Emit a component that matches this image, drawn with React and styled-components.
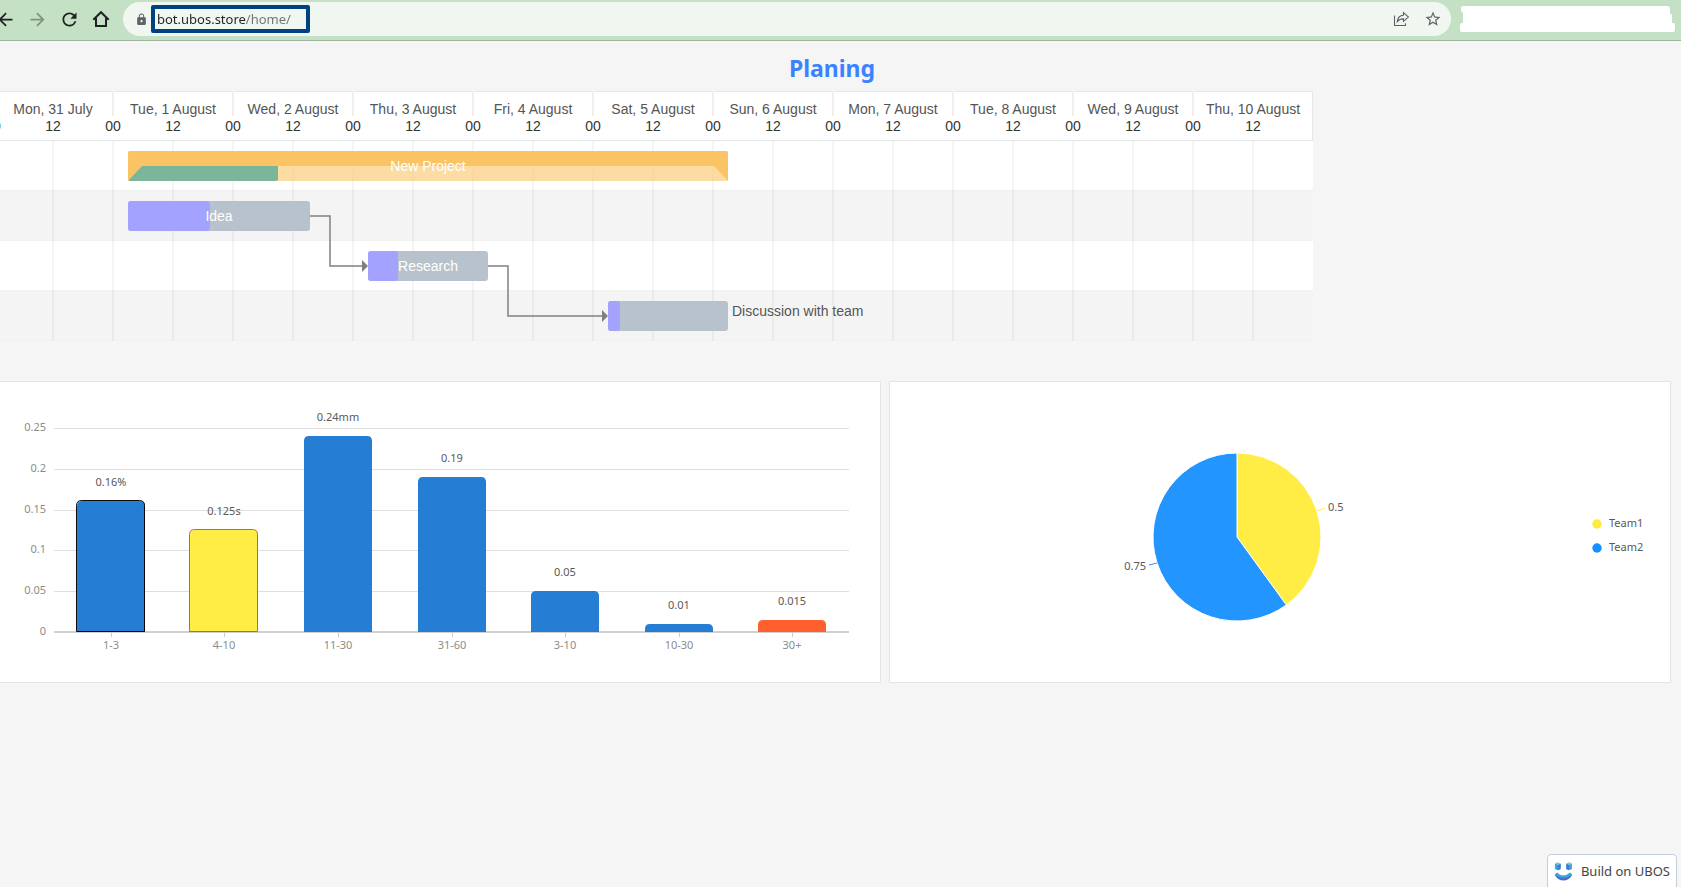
import React from 'react'
import styled, { createGlobalStyle } from 'styled-components'
import { MdArrowBack, MdArrowForward, MdRefresh, MdLock, MdStarBorder } from 'react-icons/md'

const GlobalStyle = createGlobalStyle`
  * {
    box-sizing: border-box;
  }
  body {
    margin: 0;
    background: #f5f5f5;
    font-family: "Noto Sans", "Open Sans", sans-serif;
    overflow-x: hidden;
  }
`

/* ---------- toolbar ---------- */

const Toolbar = styled.header`
  display: flex;
  align-items: center;
  gap: 6px;
  height: 41px;
  padding: 0 6px 2px 0;
  background: #c5e1c5;
  border-bottom: 1px solid #9fb59f;
  overflow: hidden;
`

const Nav = styled.nav`
  display: flex;
  margin-left: -11px;
`

const IconButton = styled.button`
  display: flex;
  align-items: center;
  justify-content: center;
  width: 32px;
  height: 32px;
  padding: 0;
  border: 0;
  background: none;
  color: ${p => (p.$muted ? '#7f917f' : p.$soft ? '#5f6368' : '#202124')};
  cursor: pointer;
`

const Omnibox = styled.div`
  flex: 1;
  display: flex;
  align-items: center;
  height: 34px;
  margin-right: 3px;
  padding: 0 2px 0 12px;
  border-radius: 17px;
  background: #f0f7f1;
  color: #5f6368;
`

const Address = styled.input`
  width: 159px;
  height: 28px;
  margin: 0 auto 0 3px;
  padding: 0 2px;
  border: 4px solid #00417f;
  border-radius: 2px;
  outline: 0;
  font: 13px "Noto Sans", "Open Sans", sans-serif;
  color: transparent;
  background: linear-gradient(90deg, #202124 91px, #6d736e 91px);
  background-clip: text;
`

/* ---------- page ---------- */

const Title = styled.h1`
  margin: 0;
  height: 50px;
  padding-right: 17px;
  line-height: 54px;
  font-size: 23px;
  text-align: center;
  color: #3b82ff;
`

const GanttScroll = styled.section`
  overflow: hidden;
  margin-bottom: 40px;
`

const GanttSvg = styled.svg`
  display: block;
  margin-left: -7px;
  font-family: "Liberation Sans", Arial, sans-serif;
  font-size: 14px;
`

const Cards = styled.section`
  display: grid;
  grid-template-columns: 881fr 782fr;
  gap: 8px;
  padding-right: 10px;
`

const Card = styled.article`
  min-width: 0;
  height: 302px;
  background: #fff;
  border: 1px solid #e4e4e4;
  ${p => p.$flush && 'border-left: 0;'}
`

const ChartSvg = styled.svg`
  display: block;
  width: 100%;
  height: 100%;
  font-size: 11px;
`

const Badge = styled.a`
  position: fixed;
  right: 4px;
  bottom: -3px;
  display: flex;
  align-items: center;
  gap: 8px;
  width: 130px;
  height: 36px;
  padding: 0 6px 2px;
  border: 1px solid #c4cddb;
  border-radius: 4px;
  background: #fff;
  color: #444;
  font-size: 13px;
  white-space: nowrap;
  text-decoration: none;
`

/* ---------- icons ---------- */

const HomeIcon = () => (
  <svg width="18" height="18" viewBox="0 0 18 18" fill="none" stroke="currentColor" strokeWidth="2">
    <path d="M1.3 9.8 9 2.2l7.7 7.6M4 8v8h10V8" />
  </svg>
)

const ShareIcon = () => (
  <svg width="17" height="16" viewBox="0 0 17 16" fill="none" stroke="currentColor" strokeWidth="1.1">
    <path d="M1.500 4.500v10h11v-2.300" />
    <path d="M10.500 1.600 15.400 6l-4.900 4.300V7.900C7.600 7.800 5.800 8.600 4.300 10.600 4.700 6.900 6.900 4.500 10.500 4.100z" />
  </svg>
)

const UbosLogo = () => (
  <svg width="20" height="22" viewBox="0 0 20 22">
    <path d="M1 3.400 4 2l3 1.200V9L4 10.300 1 9z" fill="#35a7e8" />
    <path d="M4 4.600 7 3.200V9l-3 1.300z" fill="#4d76c4" />
    <path d="M1 3.400 4 2l3 1.200-3 1.400z" fill="#6fd0f5" />
    <path d="M13 3.400 16 2l3 1.200V9l-3 1.300L13 9z" fill="#35a7e8" />
    <path d="M13 3.400 16 4.600v5.700L13 9z" fill="#4d76c4" />
    <path d="M13 3.400 16 2l3 1.200-3 1.400z" fill="#6fd0f5" />
    <path d="M1 14.200 3.500 12.600c3.500 4 9.500 4 13 0l2.500 1.600c-4 8-14 8-18 0z" fill="#36a9e6" />
    <path d="M1 14.200c4.500 5.400 13.500 5.400 18 0v1.200c-4 7.400-14 7.400-18 0z" fill="#4a6fc0" />
  </svg>
)

const Mask = () => (
  <svg width="215" height="26" viewBox="0 0 215 26" fill="#fff">
    <path d="M4 0H207q3 0 3 3v4l2 2v8h1q2 0 2 2v5q0 2-2 2H2q-2 0-2-2v-5q0-2 2-2h1V7L1 5V2q0-2 3-2z" />
  </svg>
)

/* ---------- gantt ---------- */

const DAY = 120
const HEAD = 50
const ROW = 50

const days = [
  'Mon, 31 July', 'Tue, 1 August', 'Wed, 2 August', 'Thu, 3 August',
  'Fri, 4 August', 'Sat, 5 August', 'Sun, 6 August', 'Mon, 7 August',
  'Tue, 8 August', 'Wed, 9 August', 'Thu, 10 August',
]

const tasks = [
  { name: 'New Project', start: 135, width: 600, done: 150, project: true },
  { name: 'Idea', start: 135, width: 182, done: 82 },
  { name: 'Research', start: 375, width: 120, done: 30 },
  { name: 'Discussion with team', start: 615, width: 120, done: 12, outside: true },
]

const GanttHeader = () => (
  <g textAnchor="middle">
    <rect x="0.5" y="0.5" width={days.length * DAY - 1} height={HEAD - 1} fill="#fff" stroke="#e6e6e6" />
    {days.map((day, i) => (
      <g key={day}>
        {i > 0 && <rect x={i * DAY - 1} y="0" width="2" height="25" fill="#f0f0f0" />}
        <text x={i * DAY + 60} y="23" fill="#555">{day}</text>
        <text x={i * DAY} y="40" fill="#333">00</text>
        <text x={i * DAY + 60} y="40" fill="#333">12</text>
      </g>
    ))}
  </g>
)

const ProjectBar = ({ start: x, width, done, y }) => (
  <g>
    <rect x={x} y={y} width={width} height="30" rx="2" fill="#fac465" opacity="0.6" />
    <path d={`M${x} ${y + 15}h${done}v13q0 2-2 2H${x + 1}z`} fill="#7db59a" />
    <path d={`M${x + 2} ${y}h${width - 4}q2 0 2 2v28l-14-15H${x + 14}l-14 15V${y + 2}q0-2 2-2z`} fill="#fac465" />
  </g>
)

const TaskBar = ({ start: x, width, done, y }) => (
  <g>
    <rect x={x} y={y} width={width} height="30" rx="3" fill="#b8c2cc" />
    <rect x={x} y={y} width={done} height="30" rx="3" fill="#a3a3ff" />
  </g>
)

const Arrow = ({ from, to, row }) => {
  const x = from.start + from.width
  const y = HEAD + row * ROW + 25
  return (
    <g>
      <path d={`M${x} ${y}h20v${ROW}H${to.start - 4}`} fill="none" stroke="#808080" strokeWidth="1.5" />
      <path d={`M${to.start} ${y + ROW}l-6-6v12z`} fill="#808080" />
    </g>
  )
}

const Gantt = () => {
  const width = days.length * DAY
  const height = HEAD + tasks.length * ROW
  return (
    <GanttScroll>
      <GanttSvg width={width} height={height} role="img" aria-label="Project timeline">
        {tasks.map((task, i) => (
          <g key={task.name}>
            <rect y={HEAD + i * ROW} width={width} height={ROW} fill={i % 2 ? '#f4f4f4' : '#fff'} />
            <rect y={HEAD + (i + 1) * ROW - 1} width={width} height="1" fill="#f0f0f0" />
          </g>
        ))}
        {Array.from({ length: days.length * 2 - 1 }, (_, i) => (
          <rect key={i} x={(i + 1) * 60 - 1} y={HEAD} width="2" height={height - HEAD} fill="#000" opacity="0.04" />
        ))}
        <GanttHeader />
        <Arrow from={tasks[1]} to={tasks[2]} row={1} />
        <Arrow from={tasks[2]} to={tasks[3]} row={2} />
        {tasks.map((task, i) => {
          const y = HEAD + i * ROW + 10
          const Bar = task.project ? ProjectBar : TaskBar
          return (
            <g key={task.name}>
              <Bar {...task} y={y} />
              {task.outside ? (
                <text x={task.start + task.width + 4} y={y + 15} fill="#555">{task.name}</text>
              ) : (
                <text x={task.start + task.width / 2} y={y + 20} fill="#fff" textAnchor="middle">{task.name}</text>
              )}
            </g>
          )
        })}
      </GanttSvg>
    </GanttScroll>
  )
}

/* ---------- bar chart ---------- */

const plot = { left: 54, right: 849, top: 46, bottom: 250 }
const ticks = [0.25, 0.2, 0.15, 0.1, 0.05, 0]

const bars = [
  { range: '1-3', value: 0.16, label: '0.16%', color: '#1976d2', border: '#000' },
  { range: '4-10', value: 0.125, label: '0.125s', color: '#ffeb3b', border: '#f44336' },
  { range: '11-30', value: 0.24, label: '0.24mm', color: '#1976d2' },
  { range: '31-60', value: 0.19, label: '0.19', color: '#1976d2' },
  { range: '3-10', value: 0.05, label: '0.05', color: '#1976d2' },
  { range: '10-30', value: 0.01, label: '0.01', color: '#1976d2' },
  { range: '30+', value: 0.015, label: '0.015', color: '#ff5722' },
]

const scaleY = value => plot.bottom - (value / 0.25) * (plot.bottom - plot.top)

const BarChart = () => {
  const band = (plot.right - plot.left) / bars.length
  const w = Math.round(band * 0.6)
  return (
    <ChartSvg viewBox="0 0 880 300" role="img" aria-label="Bar chart">
      {ticks.map(tick => {
        const y = Math.round(scaleY(tick))
        return (
          <g key={tick}>
            <rect
              x={plot.left}
              y={tick ? y : y - 1}
              width={plot.right - plot.left}
              height={tick ? 1 : 2}
              fill={tick ? '#dfdfdf' : '#d0d0d0'}
            />
            <text x="46" y={y + 3} textAnchor="end" fill="#8c8c8c">{tick}</text>
          </g>
        )
      })}
      {bars.map((bar, i) => {
        const mid = Math.round(plot.left + band * (i + 0.5))
        const top = Math.round(scaleY(bar.value))
        const x = mid - w / 2
        const shape = `M${x} ${plot.bottom}V${top + 5}q0-5 5-5h${w - 10}q5 0 5 5V${plot.bottom}z`
        return (
          <g key={bar.range} textAnchor="middle">
            <rect x={mid} y={plot.bottom} width="1" height="5" fill="#ccc" />
            <path d={shape} fill={bar.color} opacity="0.95" />
            {bar.border && (
              <path d={shape} transform="translate(-0.5 -0.5)" fill="none" stroke={bar.border} opacity="0.95" />
            )}
            <text x={mid} y={top - 15} fill="#595959">{bar.label}</text>
            <text x={mid} y="267" fill="#8c8c8c">{bar.range}</text>
          </g>
        )
      })}
    </ChartSvg>
  )
}

/* ---------- pie chart ---------- */

const PieChart = () => {
  const cx = 347
  const cy = 155
  const r = 84
  const angle = 0.4 * 2 * Math.PI
  const ex = cx + r * Math.sin(angle)
  const ey = cy - r * Math.cos(angle)
  return (
    <ChartSvg viewBox="0 0 780 300" role="img" aria-label="Pie chart">
      <g stroke="#fff">
        <path d={`M${cx} ${cy}V${cy - r}A${r} ${r} 0 0 1 ${ex} ${ey}z`} fill="#ffec45" />
        <path d={`M${cx} ${cy}L${ex} ${ey}A${r} ${r} 0 1 1 ${cx} ${cy - r}z`} fill="#2395ff" />
      </g>
      <path d="M427 129l8-3" stroke="#ffec45" />
      <path d="M267 181l-8 2" stroke="#2395ff" />
      <g fill="#595959">
        <text x="438" y="129">0.5</text>
        <text x="256" y="188" textAnchor="end">0.75</text>
        <text x="719" y="145">Team1</text>
        <text x="719" y="169">Team2</text>
      </g>
      <circle cx="707" cy="142" r="4.7" fill="#ffeb3b" />
      <circle cx="707" cy="166" r="4.7" fill="#1890ff" />
    </ChartSvg>
  )
}

const App = () => (
  <>
    <GlobalStyle />
    <Toolbar>
      <Nav>
        <IconButton aria-label="Back"><MdArrowBack size={21} /></IconButton>
        <IconButton aria-label="Forward" $muted><MdArrowForward size={21} /></IconButton>
        <IconButton aria-label="Reload"><MdRefresh size={21} /></IconButton>
        <IconButton aria-label="Home"><HomeIcon /></IconButton>
      </Nav>
      <Omnibox>
        <MdLock size={13} />
        <Address aria-label="Address" defaultValue="bot.ubos.store/home/" spellCheck="false" />
        <IconButton aria-label="Share" $soft><ShareIcon /></IconButton>
        <IconButton aria-label="Bookmark" $soft><MdStarBorder size={18} /></IconButton>
      </Omnibox>
      <Mask />
    </Toolbar>
    <main>
      <Title>Planing</Title>
      <Gantt />
      <Cards>
        <Card $flush><BarChart /></Card>
        <Card><PieChart /></Card>
      </Cards>
    </main>
    <Badge href="#">
      <UbosLogo />
      Build on UBOS
    </Badge>
  </>
)

export default App
